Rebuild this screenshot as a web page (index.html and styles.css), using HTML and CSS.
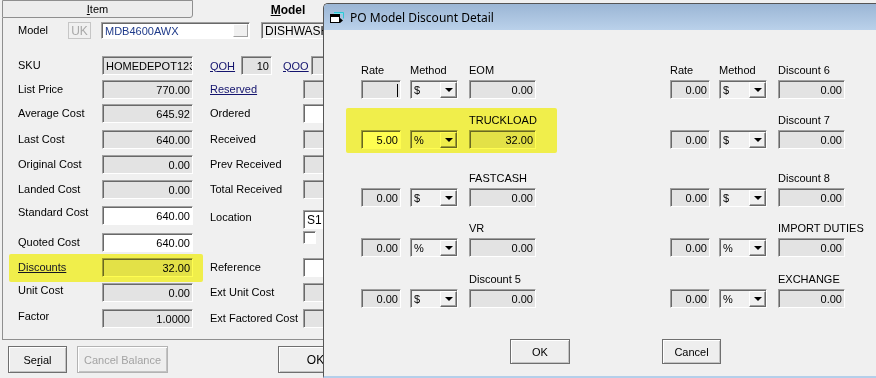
FILE: index.html
```html
<!DOCTYPE html>
<html>
<head>
<meta charset="utf-8">
<title>PO Model Discount Detail</title>
<link rel="stylesheet" href="styles.css">
</head>
<body>
<div class="main">
  <div class="tabs">
    <div class="tab tab-item"><u>I</u>tem</div>
    <div class="tab tab-model"><u>M</u>odel</div>
  </div>
  <div class="panel">
    <div class="form">
      <div class="model-row">
        <span class="model-lbl">Model</span>
        <span class="btn-uk">UK</span>
        <div class="fld white combo"><span class="combo-text">MDB4600AWX</span><span class="combo-btn"></span></div>
        <div class="fld left dish">DISHWASH</div>
      </div>

      <div class="lbl c1">SKU</div>
      <div class="fld left c2">HOMEDEPOT123</div>
      <div class="qoh-row">
        <span class="link qoh">QOH</span>
        <div class="fld qoh-fld">10</div>
        <span class="link qoo">QOO</span>
        <div class="fld qoo-fld"></div>
      </div>

      <div class="lbl c1">List Price</div>
      <div class="fld c2">770.00</div>
      <div class="lbl c4"><span class="link">Reserved</span></div>
      <div class="fld c5"></div>

      <div class="lbl c1">Average Cost</div>
      <div class="fld c2">645.92</div>
      <div class="lbl c4">Ordered</div>
      <div class="fld white c5"></div>

      <div class="lbl c1">Last Cost</div>
      <div class="fld c2">640.00</div>
      <div class="lbl c4">Received</div>
      <div class="fld c5"></div>

      <div class="lbl c1">Original Cost</div>
      <div class="fld c2">0.00</div>
      <div class="lbl c4">Prev Received</div>
      <div class="fld c5"></div>

      <div class="lbl c1">Landed Cost</div>
      <div class="fld c2">0.00</div>
      <div class="lbl c4">Total Received</div>
      <div class="fld c5"></div>

      <div class="lbl c1 up3">Standard Cost</div>
      <div class="fld white c2">640.00</div>
      <div class="lbl c4 loc-lbl">Location</div>
      <div class="fld white left c5 loc-fld">S1</div>

      <div class="lbl c1">Quoted Cost</div>
      <div class="fld white c2">640.00</div>
      <div class="chk c5"></div>

      <div class="lbl c1"><span class="link">Discounts</span></div>
      <div class="fld c2">32.00</div>
      <div class="lbl c4">Reference</div>
      <div class="fld white c5"></div>

      <div class="lbl c1 up2">Unit Cost</div>
      <div class="fld c2">0.00</div>
      <div class="lbl c4">Ext Unit Cost</div>
      <div class="fld c5"></div>

      <div class="lbl c1 up2">Factor</div>
      <div class="fld c2">1.0000</div>
      <div class="lbl c4">Ext Factored Cost</div>
      <div class="fld c5"></div>
    </div>
  </div>
  <div class="footer">
    <button class="wbtn serial">Se<u>r</u>ial</button>
    <button class="wbtn disabled cbal">Cancel Balance</button>
    <button class="wbtn okmain">OK</button>
  </div>
</div>

<div class="hl hl-main"></div>

<div class="dialog">
  <div class="titlebar">
    <svg class="ticon" width="14" height="11" viewBox="0 0 14 11">
      <rect x="0.5" y="2.5" width="9" height="8" fill="#fff" stroke="#000"/>
      <rect x="1" y="3" width="8" height="2" fill="#000"/>
      <path d="M4 0.5h9.5v6" fill="none" stroke="#2fc6d6"/>
      <rect x="4" y="1" width="9" height="1" fill="#7fe3ee"/>
      <path d="M10 6l3 2.5-3 2.5z" fill="#000"/>
    </svg>
    <span class="ttext">PO Model Discount Detail</span>
  </div>
  <div class="dbody">
    <div class="groups">
      <div class="group">
        <div class="slot">
          <span class="dl cr">Rate</span><span class="dl cm">Method</span><span class="dl cv">EOM</span>
          <div class="fld cr"><i class="caret"></i></div>
          <div class="sel cm"><span>$</span><i class="dd"></i></div>
          <div class="fld cv">0.00</div>
        </div>
        <div class="slot">
          <span class="dl cv">TRUCKLOAD</span>
          <div class="fld white cr">5.00</div>
          <div class="sel cm"><span>%</span><i class="dd"></i></div>
          <div class="fld cv">32.00</div>
        </div>
        <div class="slot s3">
          <span class="dl cv">FASTCASH</span>
          <div class="fld cr">0.00</div>
          <div class="sel cm"><span>$</span><i class="dd"></i></div>
          <div class="fld cv">0.00</div>
        </div>
        <div class="slot">
          <span class="dl cv">VR</span>
          <div class="fld cr">0.00</div>
          <div class="sel cm"><span>%</span><i class="dd"></i></div>
          <div class="fld cv">0.00</div>
        </div>
        <div class="slot s5">
          <span class="dl cv">Discount 5</span>
          <div class="fld cr">0.00</div>
          <div class="sel cm"><span>$</span><i class="dd"></i></div>
          <div class="fld cv">0.00</div>
        </div>
      </div>
      <div class="group">
        <div class="slot">
          <span class="dl cr">Rate</span><span class="dl cm">Method</span><span class="dl cv">Discount 6</span>
          <div class="fld cr">0.00</div>
          <div class="sel cm"><span>$</span><i class="dd"></i></div>
          <div class="fld cv">0.00</div>
        </div>
        <div class="slot">
          <span class="dl cv">Discount 7</span>
          <div class="fld cr">0.00</div>
          <div class="sel cm"><span>$</span><i class="dd"></i></div>
          <div class="fld cv">0.00</div>
        </div>
        <div class="slot s3">
          <span class="dl cv">Discount 8</span>
          <div class="fld cr">0.00</div>
          <div class="sel cm"><span>$</span><i class="dd"></i></div>
          <div class="fld cv">0.00</div>
        </div>
        <div class="slot">
          <span class="dl cv">IMPORT DUTIES</span>
          <div class="fld cr">0.00</div>
          <div class="sel cm"><span>%</span><i class="dd"></i></div>
          <div class="fld cv">0.00</div>
        </div>
        <div class="slot s5">
          <span class="dl cv">EXCHANGE</span>
          <div class="fld cr">0.00</div>
          <div class="sel cm"><span>%</span><i class="dd"></i></div>
          <div class="fld cv">0.00</div>
        </div>
      </div>
    </div>
    <div class="dbtns">
      <button class="wbtn dbtn ok">OK</button>
      <button class="wbtn dbtn cancel">Cancel</button>
    </div>
    <div class="hl hl-dlg"></div>
  </div>
</div>
</body>
</html>
```

FILE: styles.css
```css
* { box-sizing: border-box; }
html, body { margin: 0; padding: 0; }
body {
  width: 876px;
  height: 378px;
  overflow: hidden;
  position: relative;
  background: #f0f0f0;
  font-family: "Liberation Sans", Arial, sans-serif;
  font-size: 11px;
  color: #000;
}
u { text-decoration: underline; }

/* ---------- main window ---------- */
.main { width: 400px; display: flex; flex-direction: column; }
.tabs { display: flex; height: 18px; }
.tab { height: 18px; text-align: center; white-space: nowrap; }
.tab-item {
  margin-left: 2px;
  width: 191px;
  border: 1px solid #8f8f8f;
  border-bottom-right-radius: 3px;
  line-height: 16px;
  background: #ededed;
}
.tab-model {
  width: 190px;
  font-weight: bold;
  font-size: 12px;
  line-height: 20px;
}

.panel {
  height: 322px;
  margin-left: 2px;
  border-left: 1px solid #8f8f8f;
  border-bottom: 1px solid #8f8f8f;
  padding: 4px 0 0 15px;
}
.form {
  display: grid;
  grid-template-columns: 84px 91px 17px 93px 60px;
  grid-template-rows: 34px 24px 24px 26px 25px 25px 26px 27px 25px 25px 26px 25px;
  align-items: start;
}
.c1 { grid-column: 1; }
.c2 { grid-column: 2; }
.c4 { grid-column: 4; }
.c5 { grid-column: 5; }

.lbl { line-height: 19px; white-space: nowrap; }
.up2 { margin-top: -2px; }
.up3 { margin-top: -3px; }
.link { color: #14146e; text-decoration: underline; }

.fld {
  height: 19px;
  border: 1px solid;
  border-color: #a0a0a0 #ffffff #ffffff #a0a0a0;
  box-shadow: inset 1px 1px 0 #696969;
  background: #e3e3e3;
  text-align: right;
  padding: 1px 2px 0 3px;
  line-height: 16px;
  white-space: nowrap;
  overflow: hidden;
}
.fld.white { background: #ffffff; }
.fld.left { text-align: left; }

.model-row {
  grid-column: 1 / -1;
  display: flex;
  align-items: center;
  height: 17px;
}
.model-lbl { width: 50px; margin-top: -2px; }
.btn-uk {
  width: 23px;
  height: 17px;
  border: 1px solid #c6c6c6;
  color: #a8a8a8;
  font-size: 12px;
  display: flex;
  align-items: center;
  justify-content: center;
}
.combo {
  width: 149px;
  height: 17px;
  margin-left: 10px;
  display: flex;
  text-align: left;
  color: #1e3a8a;
  padding: 1px 1px 0 3px;
  line-height: 14px;
}
.combo-text { flex: 1; }
.combo-btn {
  width: 15px;
  height: 13px;
  background: #f0f0f0;
  border: 1px solid;
  border-color: #ffffff #a0a0a0 #a0a0a0 #ffffff;
}
.dish {
  width: 100px;
  height: 17px;
  margin-left: 11px;
  background: #f0f0f0;
  line-height: 14px;
  font-size: 12px;
}

.qoh-row {
  grid-column: 4 / -1;
  display: flex;
  align-items: center;
  height: 19px;
}
.qoh { width: 31px; }
.qoh-fld { width: 31px; flex: none; }
.qoo { width: 28px; margin-left: 11px; }
.qoo-fld { width: 40px; flex: none; }

.loc-lbl { margin-top: 2px; }
.loc-fld { margin-top: 4px; font-size: 12px; }
.chk {
  width: 13px;
  height: 13px;
  margin-top: -2px;
  background: #fff;
  border: 1px solid;
  border-color: #a0a0a0 #ffffff #ffffff #a0a0a0;
  box-shadow: inset 1px 1px 0 #696969;
}

.footer { display: flex; padding: 6px 0 0 8px; }
.wbtn {
  font-family: "Liberation Sans", Arial, sans-serif;
  font-size: 11px;
  color: #000;
  height: 27px;
  padding: 0;
  border: 1px solid #6f6f6f;
  background: #eeeeee;
  box-shadow: inset 1px 1px 0 #ffffff, inset -1px -1px 0 #c3c3c3;
}
.wbtn.disabled { color: #a3a3a3; border-color: #b3b3b3; }
.serial { width: 59px; }
.cbal { width: 91px; margin-left: 10px; }
.okmain { width: 75px; margin-left: 110px; font-size: 12px; }

/* ---------- highlight marker ---------- */
.hl {
  position: absolute;
  background: #fffd50;
  mix-blend-mode: multiply;
  border-radius: 2px;
  pointer-events: none;
}
.hl-main { left: 9px; top: 254px; width: 194px; height: 28px; }
.hl-dlg { left: 22px; top: 78px; width: 211px; height: 45px; }

/* ---------- dialog ---------- */
.dialog {
  position: absolute;
  left: 323px;
  top: 3px;
  width: 600px;
  height: 375px;
  background: #f0f0f0;
  border-left: 1px solid #555;
  border-top: 1px solid #555;
  border-bottom: 2px solid #b4cfea;
  border-top-left-radius: 5px;
  display: flex;
  flex-direction: column;
}
.titlebar {
  height: 26px;
  flex: none;
  display: flex;
  align-items: center;
  gap: 6px;
  padding-left: 6px;
  background: linear-gradient(#9bb6d5, #bad1ea);
  border-top-left-radius: 4px;
  font-family: "Noto Sans", sans-serif;
  font-size: 12px;
  color: #000;
}
.ticon { flex: none; margin-top: 1px; }
.dbody {
  flex: 1;
  position: relative;
  padding: 34px 0 0 37px;
  display: flex;
  flex-direction: column;
}
.groups { display: flex; gap: 133px; }
.group { width: 176px; display: flex; flex-direction: column; gap: 15px; }
.slot {
  display: grid;
  grid-template-columns: 40px 9px 48px 11px 67px;
  grid-template-rows: 16px 19px;
}
.slot.s3 { margin-top: 8px; }
.slot.s5 { margin-top: 1px; }
.dl { grid-row: 1; line-height: 13px; white-space: nowrap; }
.slot .fld, .slot .sel { grid-row: 2; }
.cr { grid-column: 1; }
.cm { grid-column: 3; }
.cv { grid-column: 5; }

.caret {
  display: inline-block;
  width: 1px;
  height: 13px;
  background: #000;
  vertical-align: middle;
  margin-top: -2px;
}

.sel {
  height: 19px;
  border: 1px solid;
  border-color: #a0a0a0 #ffffff #ffffff #a0a0a0;
  box-shadow: inset 1px 1px 0 #696969;
  display: flex;
  padding: 1px 0 0 3px;
  line-height: 16px;
}
.sel span { flex: 1; }
.dd {
  width: 17px;
  height: 16px;
  border: 1px solid;
  border-color: #ffffff #696969 #696969 #ffffff;
  box-shadow: inset -1px -1px 0 #a0a0a0;
  background: #f0f0f0;
  display: flex;
  align-items: center;
  justify-content: center;
}
.dd::after {
  content: "";
  border-left: 4px solid transparent;
  border-right: 4px solid transparent;
  border-top: 4px solid #000;
}

.dbtns { display: flex; gap: 92px; margin-top: 31px; padding-left: 149px; }
.dbtn { height: 25px; }
.ok { width: 60px; }
.cancel { width: 59px; }
```
